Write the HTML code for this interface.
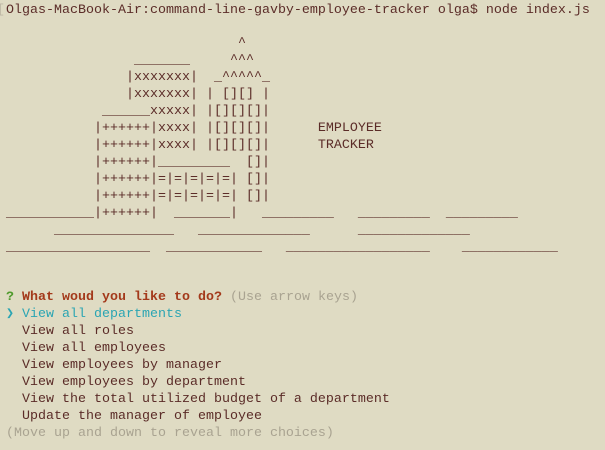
<!DOCTYPE html>
<html><head><meta charset="utf-8"><style>
html,body{margin:0;padding:0;background:#dfdbc3;width:605px;height:450px;overflow:hidden}
pre{margin:0;padding:0 0 0 6px;font-family:"Liberation Mono",monospace;font-size:13.33px;line-height:16.94px;color:#5b2c28;position:relative;top:2.5px}
.g{color:#4f9a2c;font-weight:bold}.r{color:#a3391b;font-weight:bold}.d{color:#a9a391}.c{color:#2ba5b3}.f{color:#bdb7a4;position:absolute;left:-3px;top:0}
</style></head><body><pre><span class="f">[</span>Olgas-MacBook-Air:command-line-gavby-employee-tracker olga$ node index.js

                             ^
                _______     ^^^
               |xxxxxxx|  _^^^^^_
               |xxxxxxx| | [][] |
            ______xxxxx| |[][][]|
           |++++++|xxxx| |[][][]|      EMPLOYEE
           |++++++|xxxx| |[][][]|      TRACKER
           |++++++|_________  []|
           |++++++|=|=|=|=|=| []|
           |++++++|=|=|=|=|=| []|
___________|++++++|  _______|   _________   _________  _________
      _______________   ______________      ______________
__________________  ____________   __________________    ____________


<span class="g">?</span> <span class="r">What woud you like to do?</span> <span class="d">(Use arrow keys)</span>
<span class="c">❯ View all departments</span>
  View all roles
  View all employees
  View employees by manager
  View employees by department
  View the total utilized budget of a department
  Update the manager of employee
<span class="d">(Move up and down to reveal more choices)</span></pre></body></html>
